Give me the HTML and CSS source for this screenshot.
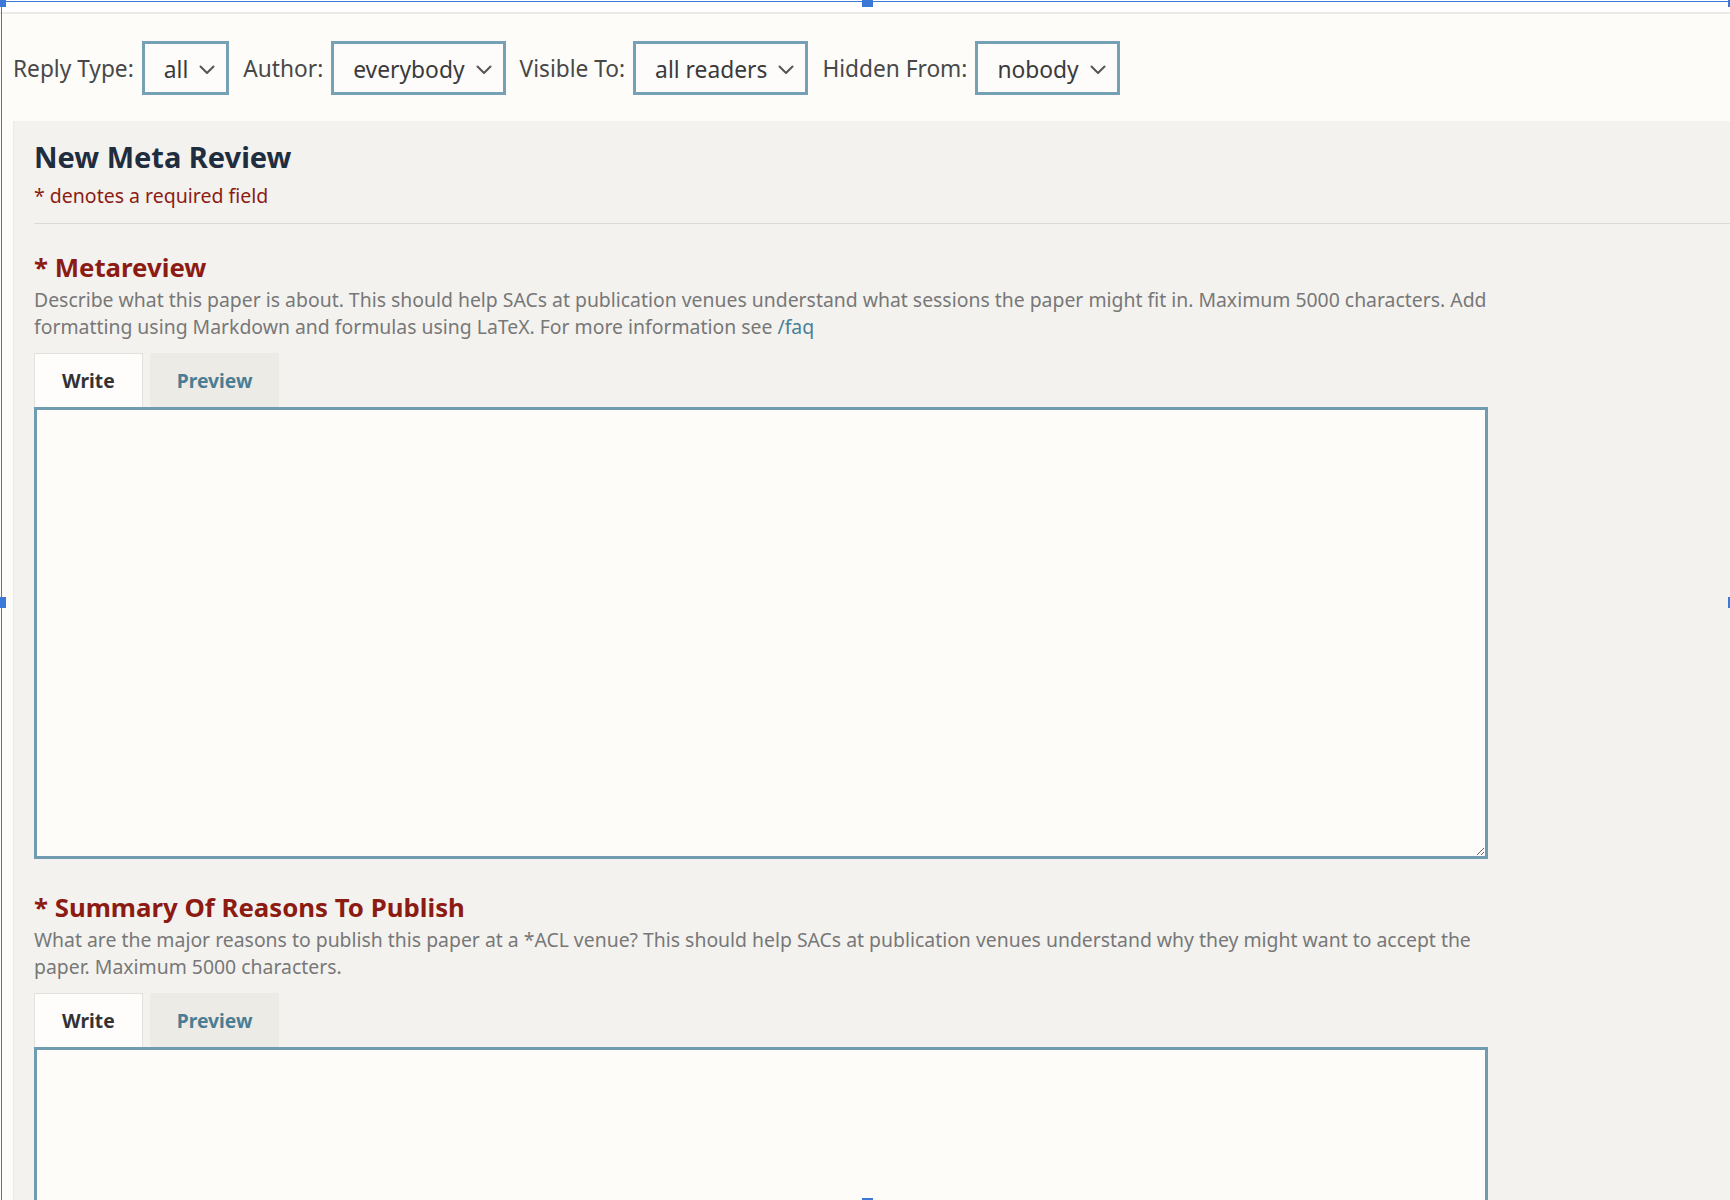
FILE: index.html
```html
<!DOCTYPE html>
<html lang="en">
<head>
<meta charset="utf-8">
<title>New Meta Review</title>
<link rel="stylesheet" href="styles.css">
</head>
<body>
<div class="topgap"></div>
<div class="page">
  <div class="filters">
    <span class="flabel">Reply Type:</span>
    <div class="select"><span class="select-value">all</span><svg class="chev" viewBox="0 0 16 10" width="16" height="10"><polyline points="1.5,1.5 8,8 14.5,1.5"/></svg></div>
    <span class="flabel">Author:</span>
    <div class="select"><span class="select-value">everybody</span><svg class="chev" viewBox="0 0 16 10" width="16" height="10"><polyline points="1.5,1.5 8,8 14.5,1.5"/></svg></div>
    <span class="flabel">Visible To:</span>
    <div class="select"><span class="select-value">all readers</span><svg class="chev" viewBox="0 0 16 10" width="16" height="10"><polyline points="1.5,1.5 8,8 14.5,1.5"/></svg></div>
    <span class="flabel">Hidden From:</span>
    <div class="select"><span class="select-value">nobody</span><svg class="chev" viewBox="0 0 16 10" width="16" height="10"><polyline points="1.5,1.5 8,8 14.5,1.5"/></svg></div>
  </div>
  <div class="panel">
    <h2 class="title">New Meta Review</h2>
    <p class="required">* denotes a required field</p>
    <hr class="divider">
    <div class="field">
      <h3 class="field-title">* Metareview</h3>
      <p class="field-desc">Describe what this paper is about. This should help SACs at publication venues understand what sessions the paper might fit in. Maximum 5000 characters. Add formatting using Markdown and formulas using LaTeX. For more information see <a class="link" href="#">/faq</a></p>
      <div class="tabs"><div class="tab tab-active">Write</div><div class="tab">Preview</div></div>
      <textarea class="editor"></textarea>
    </div>
    <div class="field">
      <h3 class="field-title">* Summary Of Reasons To Publish</h3>
      <p class="field-desc">What are the major reasons to publish this paper at a *ACL venue? This should help SACs at publication venues understand why they might want to accept the paper. Maximum 5000 characters.</p>
      <div class="tabs"><div class="tab tab-active">Write</div><div class="tab">Preview</div></div>
      <textarea class="editor"></textarea>
    </div>
  </div>
</div>
<div class="selection">
  <span class="handle h-tl"></span>
  <span class="handle h-tm"></span>
  <span class="handle h-tr"></span>
  <span class="handle h-ml"></span>
  <span class="handle h-mr"></span>
  <span class="handle h-bm"></span>
</div>
</body>
</html>
```

FILE: styles.css
```css
html, body {
  margin: 0;
  padding: 0;
  overflow: hidden;
  background: #ffffff;
  height: 1200px;
}
body {
  font-family: "Noto Sans", "Open Sans", sans-serif;
  color: #333;
  position: relative;
}
.topgap {
  height: 12px;
  background: #ffffff;
}
.page {
  background: #fdfcf9;
  border-top: 2px solid #ebeae6;
  padding-left: 13px;
}
.filters {
  height: 107px;
  display: flex;
  align-items: center;
  padding-top: 1px;
  box-sizing: border-box;
}
.flabel {
  font-size: 22.7px;
  color: #484848;
  margin-right: 8px;
  white-space: nowrap;
}
.select {
  height: 54px;
  box-sizing: border-box;
  border: 3px solid #76a1b5;
  background: #fdfcfa;
  display: flex;
  align-items: center;
  padding: 0 11px 0 19px;
  margin-right: 14px;
  gap: 11px;
}
.select-value {
  font-size: 22.8px;
  color: #3a3a3a;
  white-space: nowrap;
  position: relative;
  top: 1px;
}
.chev {
  display: block;
  fill: none;
  stroke: #555;
  stroke-width: 2;
  stroke-linecap: round;
  stroke-linejoin: round;
  position: relative;
  top: 2px;
}
.panel {
  background: #f3f2ef;
  padding: 18px 0 40px 21px;
  box-shadow: inset 2px 0 2px -1px rgba(0,0,0,0.04);
}
.title {
  margin: 0;
  font-size: 29px;
  line-height: 36px;
  font-weight: 700;
  color: #1f2d3f;
}
.required {
  margin: 8px 0 0;
  font-size: 19.5px;
  line-height: 26px;
  color: #8c1c13;
}
.divider {
  margin: 14px 0 0;
  border: 0;
  border-top: 1px solid #dcdad6;
  height: 0;
}
.field {
  width: 1454px;
  margin-top: 26px;
}
.field + .field {
  margin-top: 31px;
}
.field-title {
  margin: 0;
  font-size: 25.8px;
  line-height: 34px;
  font-weight: 700;
  color: #8c1c13;
}
.field-desc {
  margin: 3px 0 0;
  width: 1470px;
  font-size: 19.4px;
  line-height: 26.5px;
  color: #787878;
}
.link {
  color: #4a7f96;
  text-decoration: none;
}
.tabs {
  display: flex;
  gap: 7px;
  margin-top: 13px;
  height: 54px;
}
.tab {
  height: 54px;
  box-sizing: border-box;
  padding: 0 27px;
  display: flex;
  align-items: center;
  font-size: 19.3px;
  font-weight: 700;
  color: #4b7e94;
  background: #ecebe5;
}
.tab-active {
  background: #fefdfb;
  color: #333;
  border: 1px solid #e3e1dc;
  border-bottom: 0;
}
.editor {
  display: block;
  width: 1454px;
  height: 452px;
  box-sizing: border-box;
  margin: 0;
  border: 3px solid #6f9cb1;
  background: #fefcf8;
  font-family: "Noto Sans", sans-serif;
  font-size: 19px;
  resize: vertical;
  outline: none;
}
.selection {
  position: absolute;
  left: 1px;
  top: 1px;
  width: 1732px;
  height: 1202px;
  border-top: 1px solid #3c78d8;
  border-left: 1px solid #3c78d8;
  box-sizing: border-box;
  pointer-events: none;
}
.handle {
  position: absolute;
  width: 11px;
  height: 11px;
  background: #3c78d8;
}
.h-tl { left: -7px; top: -6px; }
.h-tm { left: 860px; top: -6px; }
.h-tr { left: 1726px; top: -6px; }
.h-ml { left: -7px; top: 595px; }
.h-mr { left: 1726px; top: 595px; }
.h-bm { left: 860px; top: 1196px; }
```
